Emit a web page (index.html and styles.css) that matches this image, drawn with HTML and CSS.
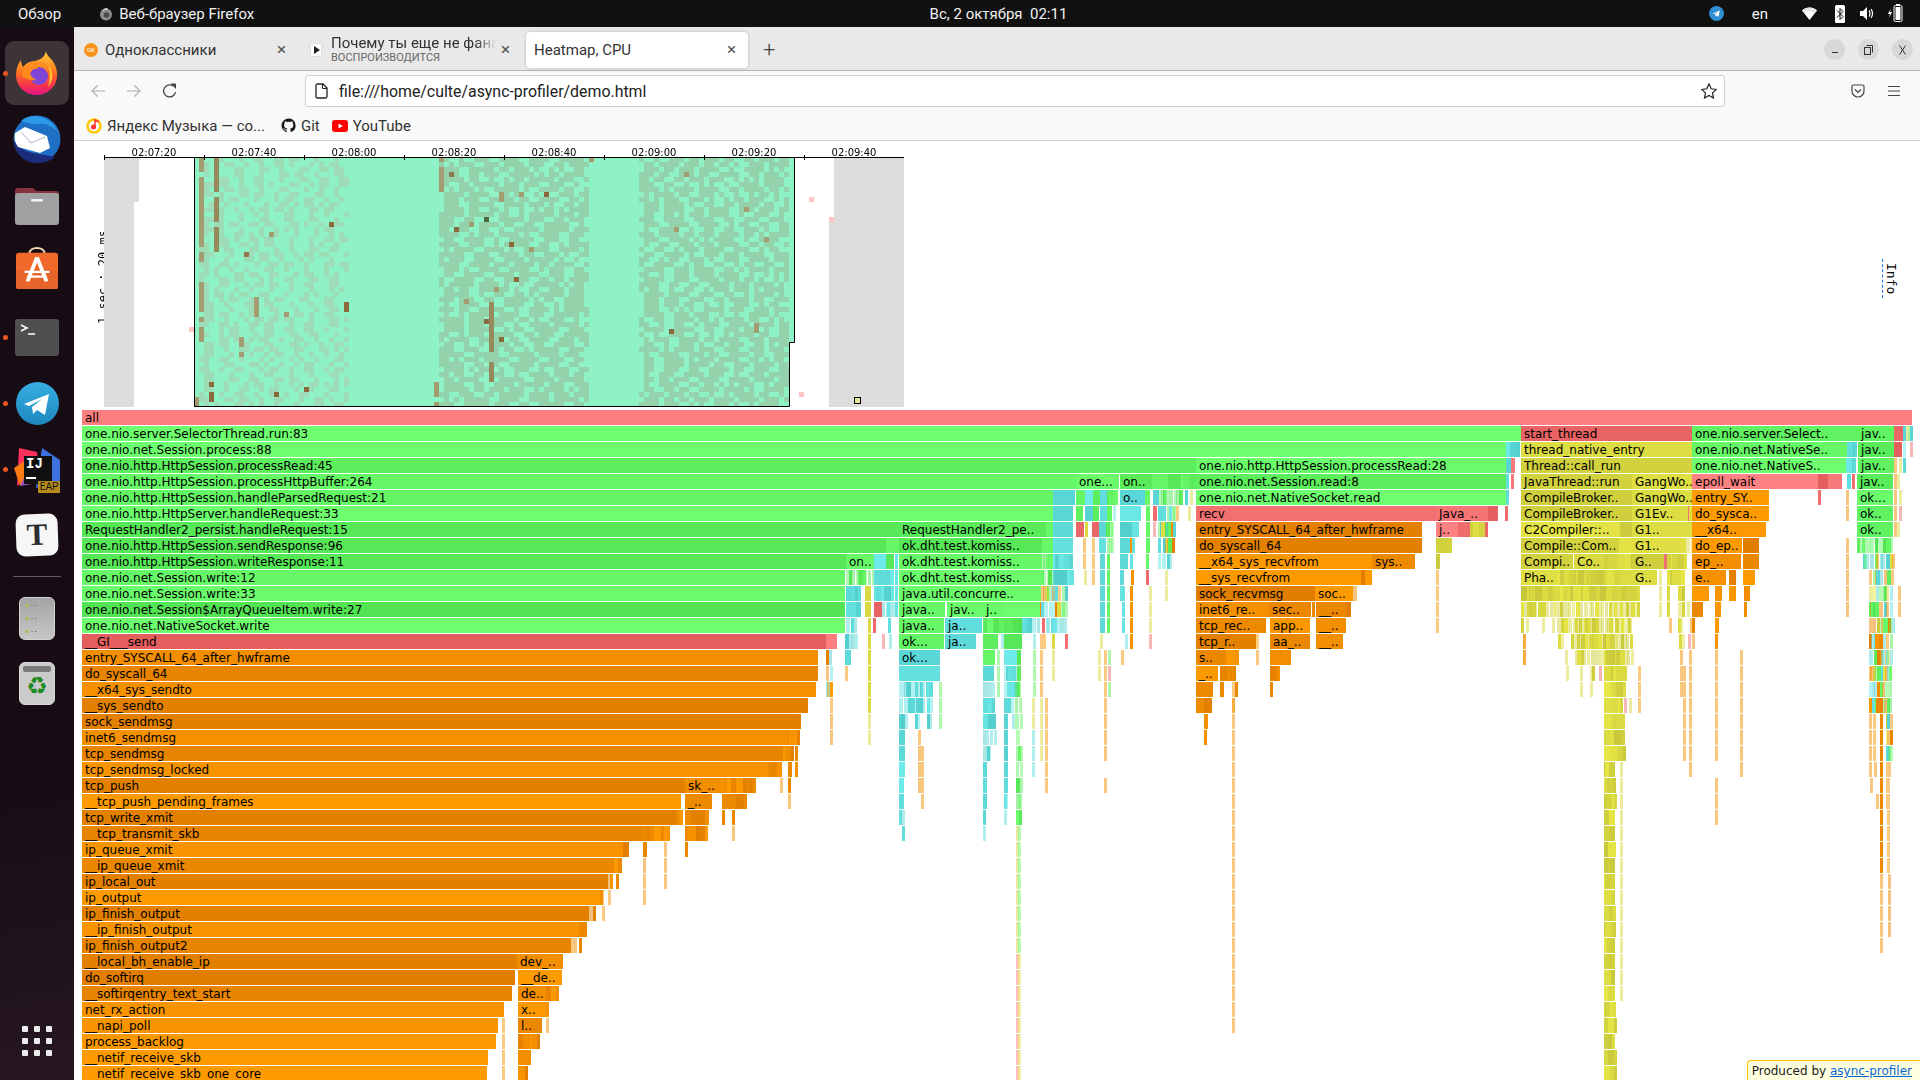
FILE: index.html
```html
<!DOCTYPE html>
<html lang="ru">
<head>
    <meta charset="UTF-8">
    <title>Heatmap, CPU</title>
    <link rel="stylesheet" href="styles.css">
</head>
<body>

<div class="topbar">
    <div class="topbar-left">
        <span>Обзор</span>
        <span class="app-name">
            <svg width="14" height="14" viewBox="0 0 14 14"><circle cx="7" cy="7.5" r="6" fill="#8d8d8d"/><circle cx="7.5" cy="8" r="2.8" fill="#4b4b4b"/><path d="M3 4C4 1.5 7 .5 9 1c-1 .8-1 1.500-.5 2C6 2.800 4.500 3.200 3 4z" fill="#d4d4d4"/></svg>
            Веб-браузер Firefox
        </span>
    </div>
    <div class="clock">Вс, 2 октября&nbsp; 02:11</div>
    <div class="tray">
        <svg class="tray-tg" width="15" height="15" viewBox="0 0 15 15"><circle cx="7.500" cy="7.500" r="7.500" fill="#2f8fd0"/><path d="M3.800 7.600l7-3-1.300 6.300-2-1.500-1 1-.3-2 2.700-2.300-3.400 2z" fill="#fff"/></svg>
        <span class="tray-lang">en</span>
        <svg class="tray-wifi" width="15" height="14" viewBox="0 0 15 14"><path d="M0 3.500C4 -.5 11 -.5 15 3.500L7.500 13z" fill="#fff"/><path d="M2.500 6L0 3.500C4 -.5 11 -.5 15 3.500L12.500 6C9.500 3.500 5.500 3.500 2.500 6z" fill="#e8e8e8"/></svg>
        <svg class="tray-bt" width="10" height="18" viewBox="0 0 10 18"><rect width="10" height="18" rx="1.500" fill="#fff"/><path d="M2 5.500l6 6-3 3v-11l3 3-6 6" fill="none" stroke="#111" stroke-width="1"/></svg>
        <svg class="tray-vol" width="15" height="15" viewBox="0 0 15 15"><path d="M1 5h3l4-4v13l-4-4H1z" fill="#fff"/><path d="M10 4.500c1.300 1.500 1.300 4.500 0 6M12 3c2 2.500 2 6.500 0 9" fill="none" stroke="#fff" stroke-width="1.200"/></svg>
        <svg class="tray-bat" width="16" height="19" viewBox="0 0 16 19"><path d="M3.500 5L1 10h2l-1 4 3-6H3z" fill="#fff"/><rect x="7" y="1.500" width="8" height="16" rx="1.500" fill="none" stroke="#fff"/><rect x="9" y="0" width="4" height="2" fill="#fff"/><rect x="8.500" y="3" width="5" height="13" fill="#fff"/></svg>
    </div>
</div>

<div class="desktop">
    <nav class="dock">
        <div class="dock-item dock-active">
            <span class="run-dot"></span>
            <svg width="44" height="44" viewBox="0 0 44 44">
                <defs><linearGradient id="fx" x1="0" y1="0" x2="0" y2="1"><stop offset="0" stop-color="#ffd23a"/><stop offset=".45" stop-color="#ff7a1c"/><stop offset=".8" stop-color="#f5304f"/><stop offset="1" stop-color="#e3128c"/></linearGradient></defs>
                <path d="M31 0c0 4 5 7 8 12 4 7 4 15 1 21-4 7-11 11-18 11C10 44 1 35 1 24 1 18 3 13 6 9c0 3 1 5 2 7 3-4 7-6 12-6 5-1 10-4 11-10z" fill="url(#fx)"/>
                <circle cx="24" cy="25" r="9" fill="#7f45d8"/>
                <path d="M7 25c0-7 6-13 13-14 4-1 9 0 12 4-4-2-9-2-12 0 2 1 3 2 3 3-4-1-7 1-8 4 1 3 3 6 7 7-6 1-12-1-15-4z" fill="#ff8a1e"/>
                <path d="M33 14c3 3 5 8 4 14-1 3-2 6-4 8 2-6 3-14 0-22z" fill="#ffc52e"/>
            </svg>
        </div>
        <div class="dock-item">
            <svg width="48" height="48" viewBox="0 0 48 48">
                <circle cx="24" cy="24" r="23.500" fill="#1f6fc4"/>
                <path d="M8 6c5-5 13-6 20-4 8 2 14 8 17 15-6-6-12-9-20-8C18 9 12 8 8 6z" fill="#2d9ae8"/>
                <path d="M1 26C10 40 26 38 42 42c-6 5-12 6-18 6C11 48 1 38 1 26z" fill="#1a2c7a"/>
                <path d="M2 18l10-6 22 9 3 12-10 5L5 32C2 28 1 23 2 18z" fill="#fff"/>
                <path d="M8 17l10 11 14-6" fill="none" stroke="#a8b4c4" stroke-width="1"/>
            </svg>
        </div>
        <div class="dock-item">
            <svg width="44" height="40" viewBox="0 0 44 40">
                <path d="M0 6q0-3 3-3h15l3 3h20q3 0 3 3v10H0z" fill="#87323c"/>
                <rect y="8" width="44" height="32" rx="3" fill="#a0a0a0"/>
                <rect x="16" y="14" width="12" height="2.500" rx="1" fill="#f2f2f2"/>
            </svg>
        </div>
        <div class="dock-item dock-store">
            <svg width="44" height="42" viewBox="0 0 44 44">
                <path d="M14 7c0-8 16-8 16 0" fill="none" stroke="#f0d9b0" stroke-width="2"/>
                <rect y="6" width="44" height="38" rx="3" fill="#f0682a"/>
                <rect y="24" width="44" height="20" rx="3" fill="#e7652b"/>
                <path d="M22 11l-10 25M22 11l10 25" stroke="#fff" stroke-width="4" fill="none"/>
                <path d="M9 26h26M12 31h20" stroke="#fff" stroke-width="2.500"/>
            </svg>
        </div>
        <div class="dock-item">
            <span class="run-dot"></span>
            <svg width="44" height="37" viewBox="0 0 44 37">
                <rect width="44" height="37" rx="3" fill="#4f4f4f"/>
                <path d="M6 6l6 3-6 3M13 15h7" fill="none" stroke="#fff" stroke-width="1.500"/>
            </svg>
        </div>
        <div class="dock-item">
            <span class="run-dot"></span>
            <svg width="43" height="43" viewBox="0 0 43 43">
                <defs><linearGradient id="tg" x1="0" y1="0" x2="0" y2="1"><stop offset="0" stop-color="#37aee2"/><stop offset="1" stop-color="#1e88c0"/></linearGradient></defs>
                <circle cx="21.500" cy="21.500" r="21.500" fill="url(#tg)"/>
                <path d="M8 22l25-10-4 21-8-5-4 4-1-7 10-8-13 7z" fill="#fff"/>
            </svg>
        </div>
        <div class="dock-item">
            <span class="run-dot"></span>
            <div class="idea">
                <svg width="46" height="42" viewBox="0 0 46 42">
                    <path d="M5 0l18 4 2 20-22 14z" fill="#fe315d"/>
                    <path d="M0 20l12-8 6 18-12 8z" fill="#f97a12"/>
                    <path d="M28 0l18 12v22l-24 6z" fill="#3b72e0"/>
                    <path d="M6 38l12-24 12 20z" fill="#9a4fc0"/>
                </svg>
                <div class="idea-box"><span>IJ</span><i></i></div>
                <div class="idea-eap">EAP</div>
            </div>
        </div>
        <div class="dock-item dock-text">
            <div class="text-icon">T</div>
        </div>
        <div class="dock-divider"></div>
        <div class="dock-item dock-small">
            <div class="disk-icon"><i></i><i></i><i></i></div>
        </div>
        <div class="dock-item dock-small">
            <div class="trash-icon"><i></i><span>♻</span></div>
        </div>
        <div class="dock-grid">
            <i></i><i></i><i></i><i></i><i></i><i></i><i></i><i></i><i></i>
        </div>
    </nav>

    <div class="browser">
        <div class="tabstrip">
            <div class="tab">
                <span class="ok-icon">ок</span>
                <span class="tab-title">Одноклассники</span>
                <span class="tab-close">×</span>
            </div>
            <div class="tab tab-media">
                <span class="play-icon"></span>
                <div class="tab-title">
                    <div class="tab-line">Почему ты еще не фана</div>
                    <div class="tab-sub">ВОСПРОИЗВОДИТСЯ</div>
                </div>
                <span class="tab-close">×</span>
            </div>
            <div class="tab tab-active">
                <span class="tab-title">Heatmap, CPU</span>
                <span class="tab-close">×</span>
            </div>
            <div class="tab-new">+</div>
            <div class="win-controls">
                <span>
                    <svg width="8" height="8" viewBox="0 0 8 8"><path d="M1 6.500h6" stroke="#333"/></svg>
                </span>
                <span>
                    <svg width="9" height="10" viewBox="0 0 9 10"><rect x=".5" y="2.500" width="6" height="7" fill="none" stroke="#333"/><path d="M2.500 .5h6v7" fill="none" stroke="#333"/></svg>
                </span>
                <span>
                    <svg width="9" height="10" viewBox="0 0 9 10"><path d="M1.500 .5l6 9M7.500 .5l-6 9" stroke="#333"/></svg>
                </span>
            </div>
        </div>

        <div class="navbar">
            <svg class="nav-icon" width="16" height="16" viewBox="0 0 16 16"><path d="M15 8H2M7.500 2.500L2 8l5.500 5.500" fill="none" stroke="#b0b0b0" stroke-width="1.200"/></svg>
            <svg class="nav-icon" width="16" height="16" viewBox="0 0 16 16"><path d="M1 8h13M8.500 2.500L14 8l-5.500 5.500" fill="none" stroke="#b0b0b0" stroke-width="1.200"/></svg>
            <svg class="nav-icon" width="16" height="16" viewBox="0 0 16 16"><path d="M13.500 9A6 6 0 1 1 11 3" fill="none" stroke="#444" stroke-width="1.300"/><path d="M8.500 .5h5.500v5.500z" fill="#444"/></svg>
            <div class="urlbar">
                <svg width="13" height="16" viewBox="0 0 13 16"><path d="M1 2.500q0-1.500 1.500-1.500H8l4 4v8.500q0 1.500-1.500 1.500h-8Q1 15 1 13.500z" fill="none" stroke="#222" stroke-width="1.300"/><path d="M7.500 1v4.500H12" fill="none" stroke="#222"/></svg>
                <span class="url">file:///home/culte/async-profiler/demo.html</span>
                <svg class="url-star" width="16" height="16" viewBox="0 0 16 16"><path d="M8 1l2.200 4.800 5.100.6-3.800 3.500 1 5.100L8 12.500 3.500 15l1-5.100L.7 6.400l5.100-.6z" fill="none" stroke="#222" stroke-width="1.200"/></svg>
            </div>
            <div class="nav-right">
                <svg width="14" height="15" viewBox="0 0 14 15"><path d="M1 2.500q0-1.500 1.500-1.500h9Q13 1 13 2.500V7a6 6 0 0 1-12 0z" fill="none" stroke="#444" stroke-width="1.200"/><path d="M4 5.500l3 3 3-3" fill="none" stroke="#444" stroke-width="1.200"/></svg>
                <svg width="14" height="12" viewBox="0 0 14 12"><path d="M1 1.500h12M1 6h12M1 10.500h12" stroke="#444" stroke-width="1.200"/></svg>
            </div>
        </div>

        <div class="bookmarks">
            <div class="bookmark bookmark-long">
                <svg width="16" height="16" viewBox="0 0 16 16"><circle cx="8" cy="8" r="6.500" fill="none" stroke="#fdc800" stroke-width="2.500"/><circle cx="7.500" cy="9" r="2.500" fill="#f33"/><path d="M9 9V2l4 2" fill="none" stroke="#f33" stroke-width="1.500"/></svg>
                Яндекс Музыка — со...
            </div>
            <div class="bookmark">
                <svg width="15" height="15" viewBox="0 0 16 16"><path d="M8 .5a7.500 7.500 0 0 0-2.400 14.600c.4.100.5-.2.500-.4v-1.400c-2 .4-2.500-1-2.500-1-.4-.9-.9-1.100-.9-1.100-.7-.5 0-.5 0-.5.800.1 1.200.8 1.200.8.700 1.200 1.800.9 2.300.7.100-.5.300-.9.500-1.100-1.700-.2-3.400-.8-3.400-3.700 0-.8.300-1.500.8-2-.1-.2-.4-1 .1-2 0 0 .6-.2 2.100.8a7 7 0 0 1 3.800 0c1.500-1 2.100-.8 2.100-.8.400 1 .1 1.800.1 2 .5.500.8 1.200.8 2 0 2.900-1.700 3.500-3.400 3.700.3.200.5.700.5 1.400v2.100c0 .2.100.5.500.4A7.500 7.500 0 0 0 8 .5z" fill="#1a1a1a"/></svg>
                Git
            </div>
            <div class="bookmark">
                <svg width="16" height="12" viewBox="0 0 16 12"><rect width="16" height="12" rx="3" fill="#f00"/><path d="M6.500 3.500v5L11 6z" fill="#fff"/></svg>
                YouTube
            </div>
        </div>

        <main class="page">
            <div class="info-tab">Info</div>

            <section class="heat">
                <div class="heat-axis">
                    <span>02:07:20</span><span>02:07:40</span><span>02:08:00</span><span>02:08:20</span>
                    <span>02:08:40</span><span>02:09:00</span><span>02:09:20</span><span>02:09:40</span>
                </div>
                <div class="heat-body">
                    <div class="heat-ylabel"><span>1 sec : 20 ms</span></div>
                    <canvas id="heatmap" width="800" height="250"></canvas>
                </div>
            </section>

            <div id="flame" class="flame"></div>

            <div class="produced">Produced by <a href="#">async-profiler</a></div>
        </main>
    </div>
</div>

<script src="script.js"></script>
</body>
</html>
```

FILE: styles.css
```css
* {
    box-sizing: border-box;
}
html, body {
    height: 100%;
}
body {
    margin: 0;
    overflow: hidden;
    display: flex;
    flex-direction: column;
    font-family: Roboto, "Noto Sans", sans-serif;
    background: #fff;
}

/* gnome panel */
.topbar {
    height: 27px;
    flex: none;
    display: grid;
    grid-template-columns: 1fr auto 1fr;
    align-items: center;
    background: #111;
    color: #f0f0f0;
    font-size: 15px;
}
.topbar-left {
    display: flex;
    align-items: center;
    padding-left: 18px;
    gap: 38px;
}
.app-name {
    display: flex;
    align-items: center;
    gap: 6px;
}
.clock {
    padding-left: 77px;
}
.tray {
    position: relative;
    height: 27px;
    display: flex;
    align-items: center;
    justify-content: flex-end;
    padding-right: 17px;
}
.tray-lang {
    margin: 0 34px 0 28px;
}
.tray-wifi {
    margin-right: 18px;
}
.tray-bt {
    margin-right: 14px;
}
.tray-vol {
    margin-right: 13px;
}

.desktop {
    flex: 1;
    display: flex;
    min-height: 0;
}

/* launcher */
.dock {
    width: 74px;
    flex: none;
    position: relative;
    display: flex;
    flex-direction: column;
    align-items: center;
    padding-top: 14px;
    background: linear-gradient(170deg, #180c14 70%, #261721);
}
.dock-item {
    height: 64px;
    width: 64px;
    margin-bottom: 2px;
    display: flex;
    align-items: center;
    justify-content: center;
    position: relative;
}
.dock-active {
    background: #3d3438;
    border-radius: 9px;
}
.dock-store svg {
    margin-top: -6px;
}
.run-dot {
    position: absolute;
    left: -2px;
    top: 30px;
    width: 5px;
    height: 5px;
    border-radius: 50%;
    background: #e9541f;
}
.idea {
    position: relative;
    width: 46px;
    height: 42px;
}
.idea-box {
    position: absolute;
    left: 10px;
    top: 8px;
    width: 28px;
    height: 28px;
    background: #101010;
    color: #fff;
    font: bold 14px "Liberation Mono", monospace;
    padding: 2px 2px;
}
.idea-box span {
    display: block;
    line-height: 13px;
}
.idea-box i {
    display: block;
    width: 10px;
    height: 2px;
    background: #fff;
    margin-top: 6px;
}
.idea-eap {
    position: absolute;
    right: 0;
    bottom: -3px;
    width: 22px;
    height: 12px;
    line-height: 12px;
    text-align: center;
    background: #b58a1c;
    color: #101010;
    font-size: 10px;
}
.dock-text {
    height: 48px;
    margin-top: 8px;
}
.text-icon {
    width: 42px;
    height: 42px;
    border-radius: 9px;
    background: #f6f6f6;
    color: #2c2c2c;
    text-align: center;
    font: bold 31px/42px "Liberation Serif", serif;
    transform: rotate(-2deg);
}
.dock-divider {
    width: 48px;
    height: 1px;
    margin: 15px 0 19px;
    background: #645a62;
}
.dock-small {
    height: 44px;
    margin-bottom: 21px;
}
.disk-icon {
    width: 36px;
    height: 43px;
    border-radius: 6px;
    background: linear-gradient(#a4a4a4, #c6c6c6);
    border: 1px solid #d4d4d4;
    padding: 6px 5px;
    display: flex;
    flex-direction: column;
    gap: 10px;
}
.disk-icon i {
    display: block;
    width: 4px;
    height: 4px;
    border-radius: 50%;
    background: #a5c24a;
    box-shadow: 5px 0 0 -1px #777, 9px 0 0 -1px #777;
}
.trash-icon {
    width: 36px;
    height: 43px;
    border-radius: 6px;
    background: #cbcbcb;
    border: 1px solid #d8d8d8;
    padding: 3px;
    text-align: center;
}
.trash-icon i {
    display: block;
    height: 6px;
    border-radius: 2px;
    background: #7a7a7a;
}
.trash-icon span {
    display: block;
    color: #1f8a1f;
    font: 24px/28px "DejaVu Sans", sans-serif;
}
.dock-grid {
    position: absolute;
    left: 22px;
    bottom: 24px;
    display: grid;
    grid-template-columns: repeat(3, 6px);
    gap: 6px;
}
.dock-grid i {
    height: 6px;
    border-radius: 1px;
    background: #ececec;
}

/* firefox chrome */
.browser {
    flex: 1;
    min-width: 0;
    display: flex;
    flex-direction: column;
}
.tabstrip {
    height: 44px;
    flex: none;
    display: flex;
    align-items: center;
    padding-top: 2px;
    background: #e9e9e9;
    border-bottom: 1px solid #b4b4b4;
    color: #333;
    font-size: 15px;
}
.tab {
    width: 226px;
    height: 36px;
    display: flex;
    align-items: center;
    padding: 0 12px 0 10px;
    gap: 7px;
    flex: none;
}
.tab-media {
    padding-right: 14px;
    gap: 9px;
}
.tab-active {
    width: 222px;
    background: #fff;
    border-radius: 4px;
    box-shadow: 0 0 3px rgba(0, 0, 0, .25);
    padding: 0 10px 0 8px;
}
.tab-title {
    flex: 1;
    min-width: 0;
    overflow: hidden;
    white-space: nowrap;
}
.tab-line {
    line-height: 17px;
    -webkit-mask-image: linear-gradient(90deg, #000 88%, transparent);
    mask-image: linear-gradient(90deg, #000 88%, transparent);
}
.tab-sub {
    line-height: 12px;
    font-size: 11px;
    color: #666;
}
.tab-close {
    font-size: 17px;
    line-height: 17px;
    color: #555;
    margin-right: 2px;
}
.tab-media .tab-close {
    margin-left: -4px;
}
.ok-icon {
    width: 14px;
    height: 14px;
    border-radius: 50%;
    background: #f7931e;
    color: #fff;
    font-size: 7px;
    line-height: 14px;
    text-align: center;
}
.play-icon {
    width: 12px;
    height: 14px;
    border: 1px solid #ddd;
    border-radius: 2px;
    background: #fff;
    position: relative;
    flex: none;
}
.play-icon::after {
    content: "";
    position: absolute;
    left: 3px;
    top: 2px;
    border-left: 6px solid #222;
    border-top: 4px solid transparent;
    border-bottom: 4px solid transparent;
}
.tab-new {
    margin-left: 15px;
    font-size: 22px;
    font-weight: 300;
    color: #444;
}
.win-controls {
    margin-left: auto;
    padding-right: 7px;
    display: flex;
    gap: 13px;
}
.win-controls span {
    width: 21px;
    height: 21px;
    border-radius: 50%;
    background: #d8d8d8;
    display: flex;
    align-items: center;
    justify-content: center;
}

.navbar {
    height: 38px;
    flex: none;
    display: flex;
    align-items: center;
    padding: 2px 0 0 16px;
    background: #f9f9fa;
    position: relative;
}
.nav-icon {
    margin-right: 20px;
    flex: none;
}
.urlbar {
    width: 1420px;
    height: 32px;
    margin-left: 107px;
    flex: none;
    display: flex;
    align-items: center;
    gap: 11px;
    padding: 0 7px 0 9px;
    background: #fff;
    border: 1px solid #cfcfcf;
    border-radius: 3px;
    font-size: 15.900px;
    color: #222;
}
.url {
    flex: 1;
}
.nav-right {
    margin-left: auto;
    display: flex;
    align-items: center;
    gap: 22px;
    padding-right: 19px;
}

.bookmarks {
    height: 32px;
    flex: none;
    display: flex;
    align-items: center;
    gap: 12px;
    padding: 2px 0 0 12px;
    background: #f9f9fa;
    border-bottom: 1px solid #cfcfcf;
    font-size: 15px;
    color: #333;
}
.bookmark {
    display: flex;
    align-items: center;
    gap: 5px;
}
.bookmark-long {
    margin-right: 4px;
}

/* the profiler page */
.page {
    flex: 1;
    position: relative;
    overflow: hidden;
    background: #fff;
    font-family: "DejaVu Sans", sans-serif;
}
.heat {
    width: 800px;
    margin-left: 30px;
}
.heat-axis {
    display: flex;
    height: 16px;
    box-shadow: 0 1px 0 #000;
    position: relative;
    z-index: 1;
}
.heat-axis span {
    width: 100px;
    position: relative;
    text-align: center;
    font-size: 10px;
    line-height: 24px;
    height: 15px;
}
.heat-axis span::after {
    content: "";
    position: absolute;
    left: 0;
    top: 14px;
    width: 1px;
    height: 5px;
    background: #000;
}
.heat-body {
    position: relative;
    height: 250px;
}
#heatmap {
    display: block;
}
.heat-ylabel {
    position: absolute;
    right: 100%;
    top: 75px;
    width: 8px;
    height: 92px;
    overflow: hidden;
}
.heat-ylabel span {
    display: block;
    width: 14px;
    height: 92px;
    writing-mode: vertical-rl;
    transform: rotate(180deg);
    font: 12px/14px "DejaVu Sans Mono", monospace;
    white-space: nowrap;
}
.info-tab {
    position: absolute;
    top: 118px;
    right: 22px;
    height: 39px;
    padding-left: 2px;
    writing-mode: vertical-rl;
    border-left: 1px dashed #1a73e8;
    font: 13px/13px "DejaVu Sans Mono", monospace;
    text-align: center;
}
.flame {
    margin: 3px 8px 0;
}
.flame-row {
    position: relative;
    height: 15px;
    margin-bottom: 1px;
}
.frame {
    position: absolute;
    top: 0;
    bottom: 0;
    overflow: hidden;
    white-space: nowrap;
    padding-left: 3px;
    font-size: 12px;
    line-height: 17px;
    color: #000;
}
.produced {
    position: absolute;
    right: 0;
    bottom: 0;
    height: 20px;
    padding: 1px 8px 0 4px;
    background: #ffffe0;
    border: 1px solid #ffc000;
    border-width: 1px 0 0 1px;
    border-top-left-radius: 4px;
    font-size: 12px;
    line-height: 19px;
    color: #222;
}
.produced a {
    color: #0a66d8;
}
```

FILE: script.js
```js
// seeded random so the picture is the same every run
let seed = 12345;
function rnd() {
    seed = (seed * 1664525 + 1013904223) % 4294967296;
    return seed / 4294967296;
}

const palette = {
    g: [0x50, 0xe1, 0x50, 30, 30, 30],
    a: [0x50, 0xcc, 0xcc, 30, 30, 30],
    r: [0xe1, 0x5a, 0x5a, 30, 40, 40],
    y: [0xc8, 0xc8, 0x3c, 30, 30, 10],
    o: [0xe1, 0x7d, 0x00, 30, 30, 0]
};

function colorOf(type, shade) {
    const c = palette[type];
    const r = Math.round(c[0] + shade * c[3]);
    const g = Math.round(c[1] + shade * c[4]);
    const b = Math.round(c[2] + shade * c[5]);
    return `rgb(${r},${g},${b})`;
}

/* ---------- heatmap ---------- */

function drawHeatmap() {
    const ctx = document.getElementById('heatmap').getContext('2d');
    const X0 = 104, Y0 = 157;
    const cell = (x, y, col) => {
        ctx.fillStyle = col;
        ctx.fillRect(x - X0, y - Y0, 5, 5);
    };

    ctx.fillStyle = '#dcdcdc';
    ctx.fillRect(0, 0, 35, 45);
    ctx.fillRect(0, 45, 30, 205);
    ctx.fillRect(730, 0, 70, 60);
    ctx.fillRect(725, 60, 75, 190);

    ctx.fillStyle = '#8ff2c6';
    ctx.fillRect(90, 0, 600, 185);
    ctx.fillRect(90, 0, 595, 250);

    // [from x, to x, longest dark run, longest light run, colour]
    const blocks = [
        [199, 349, 2, 3, '#9ddcb6'],
        [439, 589, 5, 2, '#93d2ab'],
        [639, 789, 4, 2, '#93d2ab']
    ];
    for (const [a, b, darkRun, lightRun, col] of blocks) {
        for (let y = 157; y < 407; y += 5) {
            let x = a + 5 * Math.floor(rnd() * 2);
            while (x < b) {
                let run = 1 + Math.floor(rnd() * darkRun);
                for (; run > 0 && x < b; run--, x += 5) cell(x, y, col);
                x += 5 * (1 + Math.floor(rnd() * lightRun));
            }
        }
    }

    const streak = (x, y0, y1, col) => {
        for (let y = y0; y < y1; y += 5) {
            if (rnd() > 0.15) cell(x, y, col);
        }
    };
    const olive = '#a39c70', brown = '#968a5c', dark = '#8a6a3c';
    streak(199, 157, 342, olive);
    streak(214, 157, 252, brown);
    streak(209, 382, 407, dark);
    streak(194, 397, 407, olive);
    streak(254, 297, 317, olive);
    streak(239, 337, 357, olive);
    streak(344, 302, 312, dark);
    streak(434, 382, 407, olive);
    streak(439, 157, 192, olive);
    streak(499, 192, 202, olive);
    streak(489, 302, 382, brown);
    streak(494, 287, 297, olive);
    streak(754, 323, 332, olive);
    [[244, 252, '#96744a'], [329, 222, dark], [269, 232, olive], [284, 312, olive], [304, 387, dark],
     [274, 392, dark], [484, 217, '#4d6a3c'], [454, 227, dark], [469, 222, olive], [509, 242, dark],
     [529, 247, olive], [514, 277, dark], [484, 319, dark], [544, 192, dark], [519, 192, olive],
     [669, 329, dark], [764, 237, olive], [744, 207, olive], [684, 172, olive], [674, 227, olive],
     [464, 299, olive], [499, 337, dark], [449, 172, '#8a7a50'], [589, 157, olive]
    ].forEach(([x, y, col]) => cell(x, y, col));

    // stray pink cells
    [[189, 327], [809, 197], [829, 217], [799, 392]].forEach(([x, y]) => cell(x, y, '#ffc4c4'));

    // current selection outline
    ctx.strokeStyle = '#000';
    ctx.lineWidth = 1;
    ctx.beginPath();
    ctx.moveTo(90.5, 0);
    ctx.lineTo(90.5, 249.5);
    ctx.lineTo(685.5, 249.5);
    ctx.lineTo(685.5, 185.5);
    ctx.lineTo(690.5, 185.5);
    ctx.lineTo(690.5, 0);
    ctx.stroke();

    // small marker
    ctx.fillStyle = '#e6e696';
    ctx.fillRect(751, 241, 5, 5);
    ctx.strokeRect(750.5, 240.5, 6, 6);
}

/* ---------- flame graph ---------- */

const rows = Array.from({ length: 42 }, () => []);

// a frame is [from x, to x, code, label]; code is type + shade digit, "p" = faded,
// "*" = solid band of stripes, "~" = stripes with holes
function add(k, ...frames) {
    rows[k].push(...frames);
}
function span(from, to, ...frames) {
    for (let k = from; k <= to; k++) add(k, ...frames);
}
// 1px line
function ln(x, code) {
    return [x, x + 1, code || 'o5p'];
}

const labels = [
    ['all', 'r8', 1912],
    ['one.nio.server.SelectorThread.run:83', 'g9', 1521],
    ['one.nio.net.Session.process:88', 'g9', 1506],
    ['one.nio.http.HttpSession.processRead:45', 'g4', 1196],
    ['one.nio.http.HttpSession.processHttpBuffer:264', 'g7', 1076],
    ['one.nio.http.HttpSession.handleParsedRequest:21', 'g6', 1053],
    ['one.nio.http.HttpServer.handleRequest:33', 'g9', 1053],
    ['RequestHandler2_persist.handleRequest:15', 'g2', 899],
    ['one.nio.http.HttpSession.sendResponse:96', 'g2', 886],
    ['one.nio.http.HttpSession.writeResponse:11', 'g2', 846],
    ['one.nio.net.Session.write:12', 'g7', 845],
    ['one.nio.net.Session.write:33', 'g8', 845],
    ['one.nio.net.Session$ArrayQueueItem.write:27', 'g1', 845],
    ['one.nio.net.NativeSocket.write', 'g9', 845],
    ['__GI___send', 'r1', 826],
    ['entry_SYSCALL_64_after_hwframe', 'o5', 818],
    ['do_syscall_64', 'o2', 818],
    ['__x64_sys_sendto', 'o6', 816],
    ['__sys_sendto', 'o1', 808],
    ['sock_sendmsg', 'o1', 795],
    ['inet6_sendmsg', 'o6', 787],
    ['tcp_sendmsg', 'o2', 783],
    ['tcp_sendmsg_locked', 'o7', 768],
    ['tcp_push', 'o1', 685],
    ['__tcp_push_pending_frames', 'o9', 681],
    ['tcp_write_xmit', 'o1', 677],
    ['__tcp_transmit_skb', 'o2', 643],
    ['ip_queue_xmit', 'o7', 617],
    ['__ip_queue_xmit', 'o3', 614],
    ['ip_local_out', 'o1', 608],
    ['ip_output', 'o9', 600],
    ['ip_finish_output', 'o1', 589],
    ['__ip_finish_output', 'o7', 579],
    ['ip_finish_output2', 'o2', 571],
    ['__local_bh_enable_ip', 'o1', 517],
    ['do_softirq', 'o0', 515],
    ['__softirqentry_text_start', 'o2', 512],
    ['net_rx_action', 'o7', 504],
    ['__napi_poll', 'o7', 498],
    ['process_backlog', 'o8', 496],
    ['__netif_receive_skb', 'o9', 488],
    ['__netif_receive_skb_one_core', 'o9', 487]
];
labels.forEach(([name, code, end], k) => add(k, [82, end, code, name]));

// first rows, right hand part
add(1, [1692, 1858, 'g5', 'one.nio.server.Select..'], [1521, 1692, 'r2', 'start_thread'], [1858, 1894, 'g5', 'jav..'], [1894, 1903, 'r3'], [1903, 1912, 'm~']);
add(2, [1506, 1520, 'a*'], [1521, 1692, 'y6', 'thread_native_entry'], [1692, 1847, 'g7', 'one.nio.net.NativeSe..'], [1847, 1857, 'a*'], [1858, 1894, 'g3', 'jav..'], [1894, 1902, 'r1'], [1903, 1906, 'a9p'], ln(1910, 'r5p'));
add(3, [1196, 1506, 'g8', 'one.nio.http.HttpSession.processRead:28'], [1506, 1511, 'a*'], [1511, 1515, 'r7'], [1521, 1692, 'y3', 'Thread::call_run'], [1692, 1846, 'g9', 'one.nio.net.NativeS..'], [1846, 1855, 'a*'], [1858, 1894, 'g5', 'jav..'], ln(1894), ln(1899, 'y5p'), [1903, 1905, 'a4']);
add(4, [1076, 1119, 'g8', 'one...'], [1120, 1152, 'g3', 'on..'], [1152, 1168, 'g7'], [1168, 1181, 'g2'], [1181, 1196, 'g*'],
    [1196, 1506, 'g4', 'one.nio.net.Session.read:8'], [1506, 1509, 'a5'], [1511, 1514, 'r7'],
    [1521, 1632, 'y3', 'JavaThread::run'], [1632, 1692, 'y7', 'GangWo..'], [1692, 1818, 'r9', 'epoll_wait'], [1818, 1828, 'r1'], [1828, 1842, 'r7'], [1847, 1851, 'a5'], [1852, 1855, 'r5'], [1857, 1893, 'g3', 'jav..'], ln(1894), ln(1897, 'y5p'));
add(5, [1053, 1075, 'a3'], [1076, 1085, 'g6'], [1085, 1093, 'a9'], [1093, 1100, 'g4'], [1100, 1107, 'a5'], [1107, 1117, 'g*'], [1120, 1145, 'a3', 'o..'], [1145, 1150, 'g7'], [1153, 1159, 'a3'], [1159, 1181, 'g~'], [1185, 1188, 'a3'], ln(1190, 'y5p'),
    [1196, 1506, 'g9', 'one.nio.net.NativeSocket.read'], ln(1506, 'a5'),
    [1521, 1632, 'y2', 'CompileBroker..'], [1632, 1692, 'y6', 'GangWo..'], [1692, 1769, 'o9', 'entry_SY..'], ln(1818, 'r5'), ln(1846), [1857, 1893, 'g8', 'ok...'], ln(1894), ln(1899, 'y5p'));
add(6, [1053, 1073, 'a3'], [1076, 1083, 'g5'], [1085, 1093, 'a2'], [1093, 1099, 'g4'], [1100, 1107, 'a5'], [1107, 1112, 'g*'], ln(1113, 'a9p'), [1120, 1141, 'a8'], [1146, 1150, 'g7'], [1153, 1157, 'r4'], [1158, 1166, 'a5'], [1167, 1179, 'm~'], ln(1188, 'y5p'),
    [1196, 1436, 'r5', 'recv'], [1436, 1488, 'r6', 'Java_..'], [1488, 1497, 'r*'], [1505, 1507, 'r4'],
    [1521, 1632, 'y2', 'CompileBroker..'], [1632, 1688, 'y6', 'G1Ev..'], ln(1688, 'r5'), [1689, 1692, 'y7'], [1692, 1769, 'o9', 'do_sysca..'], ln(1846), [1857, 1893, 'g5', 'ok..'], ln(1894), ln(1899, 'r5p'));
add(7, [899, 1046, 'g3', 'RequestHandler2_pe..'], [1046, 1053, 'g7'], [1053, 1073, 'a4'], [1076, 1084, 'r3'], ln(1085, 'y5'), [1092, 1099, 'r3'], [1099, 1106, 'a3'], [1106, 1113, 'g~'], [1120, 1132, 'a1'], [1132, 1139, 'a7'], [1146, 1150, 'g7'], ln(1153, 'r5p'), [1158, 1175, 'm~'],
    [1196, 1422, 'o1', 'entry_SYSCALL_64_after_hwframe'], [1436, 1458, 'r9', 'j..'], [1458, 1470, 'r4'], [1470, 1485, 'y*'], ln(1485, 'r3'),
    [1521, 1620, 'y8', 'C2Compiler::..'], [1620, 1632, 'y1'], [1632, 1692, 'y6', 'G1..'], [1692, 1766, 'o8', '__x64..'], [1857, 1893, 'g5', 'ok..'], ln(1894), ln(1897, 'y5p'));
add(8, [886, 899, 'g7'], [899, 1042, 'g2', 'ok.dht.test.komiss..'], [1042, 1053, 'g7'], [1053, 1073, 'a6'], ln(1083, 'o7p'), ln(1092, 'o7p'), [1099, 1106, 'a6'], [1107, 1113, 'g~'], [1120, 1130, 'a4'], ln(1130, 'o7'), [1132, 1135, 'a7'], [1146, 1150, 'g7'], [1158, 1160, 'a5'], [1163, 1173, 'm~'],
    [1196, 1422, 'o1', 'do_syscall_64'], [1436, 1452, 'y3'],
    [1521, 1619, 'y3', 'Compile::Com..'], [1619, 1632, 'y8'], [1632, 1686, 'y7', 'G1..'], [1686, 1692, 'y~'], [1692, 1742, 'o9', 'do_ep..'], [1743, 1759, 'o0'], ln(1846), [1857, 1893, 'g~']);
add(9, [846, 874, 'g7', 'on..'], [874, 886, 'a9'], [886, 894, 'g2'], [895, 898, 'a7'], [899, 1042, 'g7', 'ok.dht.test.komiss..'], [1042, 1053, 'g~'], [1053, 1073, 'a*'], ln(1083, 'o7p'), ln(1092, 'o7p'), [1100, 1105, 'a4'], [1107, 1110, 'g6'], [1120, 1128, 'a4'], [1130, 1133, 'a7'], [1146, 1149, 'g7'], [1158, 1172, 'a~'],
    [1196, 1372, 'o8', '__x64_sys_recvfrom'], [1372, 1415, 'o4', 'sys..'], [1436, 1440, 'y1'],
    [1521, 1573, 'y3', 'Compi..'], [1574, 1604, 'y5', 'Co..'], [1604, 1632, 'y*'], [1632, 1664, 'y2', 'G..'], ln(1664, 'r5'), [1667, 1686, 'y*'], [1692, 1741, 'o5', 'ep_..'], [1743, 1759, 'o3'], ln(1846), [1863, 1893, 'm~']);
add(10, [846, 874, 'g~'], [874, 894, 'a*'], [895, 898, 'a7'], [899, 1041, 'g8', 'ok.dht.test.komiss..'], [1041, 1053, 'g~'], [1053, 1072, 'a*'], ln(1084, 'y5p'), ln(1092, 'o7p'), [1100, 1105, 'a4'], [1107, 1109, 'g6'], [1120, 1124, 'a4'], ln(1131, 'o7'), [1146, 1149, 'r4'], [1165, 1168, 'y5p'],
    [1196, 1372, 'o9', '__sys_recvfrom'], [1361, 1365, 'o0'], ln(1436, 'o7p'),
    [1521, 1557, 'y7', 'Pha..'], [1557, 1632, 'y*'], [1632, 1657, 'y6', 'G..'], ln(1659, 'y5p'), [1667, 1685, 'y*'], [1692, 1726, 'o6', 'e..'], [1729, 1736, 'o1'], [1743, 1755, 'o9'], ln(1846), [1869, 1893, 'm~']);
add(11, [846, 860, 'a*'], ln(865, 'y5'), ln(868, 'y5'), [874, 894, 'a*'], [895, 898, 'a7'], [899, 1041, 'g8', 'java.util.concurre..'], [1041, 1068, 'm~'], [1100, 1105, 'a4'], [1107, 1109, 'g6'], [1120, 1125, 'a7'], ln(1130, 'o7'), ln(1149, 'y5p'), ln(1165, 'y5p'),
    [1196, 1315, 'o0', 'sock_recvmsg'], [1315, 1353, 'o9', 'soc..'], [1353, 1357, 'o4p'], ln(1436, 'o7p'),
    [1521, 1640, 'y*'], ln(1659, 'y5p'), [1667, 1670, 'y5'], [1678, 1684, 'y~'], [1692, 1709, 'o8'], [1715, 1722, 'o7'], [1729, 1736, 'o8'], [1744, 1750, 'o5'], ln(1846), [1869, 1893, 'm~'], ln(1898));
add(12, [846, 860, 'a*'], ln(865, 'y5'), ln(868, 'y5'), [874, 882, 'r2'], [882, 894, 'a~'], [895, 898, 'a7'], [899, 945, 'g7', 'java..'], [947, 983, 'g8', 'jav..'], [983, 1005, 'g8', 'j..'], [1005, 1040, 'g9'], [1040, 1068, 'm~'], [1100, 1105, 'a4'], ln(1107, 'g6'), [1122, 1125, 'a7'], ln(1130, 'o7'), ln(1149, 'y5p'),
    [1196, 1269, 'o6', 'inet6_re..'], [1269, 1311, 'o3', 'sec..'], ln(1312, 'o3'), [1316, 1346, 'o3', '__..'], [1346, 1351, 'o0'], ln(1436, 'o7p'),
    [1521, 1640, 'y~'], ln(1659, 'y5p'), [1667, 1670, 'y5'], [1678, 1684, 'y~'], ln(1687, 'y5p'), [1692, 1703, 'o3'], [1715, 1721, 'o7'], [1744, 1747, 'o5'], ln(1846), [1869, 1893, 'm~'], ln(1898));
add(13, [846, 857, 'a~'], ln(868, 'y5'), [873, 876, 'r4'], [888, 891, 'a5'], [899, 944, 'g7', 'java..'], [945, 982, 'a5', 'ja..'], [983, 1022, 'g*'], [1022, 1038, 'a~'], [1042, 1044, 'r4'], [1046, 1067, 'a~'], [1100, 1105, 'a4'], ln(1107, 'g6'), [1122, 1124, 'a7'], ln(1130, 'o7'), ln(1149, 'y5p'),
    [1196, 1266, 'o4', 'tcp_rec..'], [1270, 1310, 'o8', 'app..'], [1316, 1346, 'o5', '__..'], ln(1436, 'o7p'),
    [1521, 1523, 'y4'], ln(1526, 'y5p'), ln(1542, 'y5p'), ln(1552, 'y5p'), [1557, 1632, 'y~'], ln(1669), [1678, 1683, 'y~'], ln(1690), [1692, 1695, 'o2'], [1715, 1719, 'o8'], [1869, 1893, 'm~']);
add(14, [826, 837, 'r8'], [845, 857, 'a~'], ln(868, 'y5'), ln(882, 'r5p'), ln(889, 'a5p'), [899, 944, 'g6', 'ok...'], [945, 976, 'a4', 'ja..'], [983, 998, 'g4'], ln(1001, 'a5p'), [1004, 1022, 'g2'], ln(1033, 'a5p'), [1040, 1046, 'o7p'], ln(1052, 'y5'), ln(1065, 'r5'), ln(1100, 'y5p'), ln(1125, 'a5p'), ln(1130, 'o7'), ln(1149, 'r5p'),
    [1196, 1256, 'o1', 'tcp_r..'], [1256, 1259, 'o9p'], [1270, 1310, 'o3', 'aa_..'], [1316, 1343, 'o5', '__..'], ln(1523, 'o7p'),
    ln(1523, 'o5p'), [1558, 1565, 'y~'], [1571, 1631, 'y~'], [1679, 1683, 'y~'], ln(1688, 'r5p'), ln(1692), [1715, 1717, 'o7'], [1869, 1893, 'm~']);
add(15, [826, 833, 'm~'], [845, 851, 'a4'], ln(868, 'y5'), [899, 940, 'a3', 'ok...'], [983, 995, 'g7'], ln(997, 'g5p'), [1004, 1017, 'a9'], [1017, 1021, 'g2'], ln(1033, 'g5p'), ln(1040, 'o7p'), ln(1052, 'y5p'), ln(1104, 'o7p'), ln(1108, 'g5p'), ln(1121, 'o7p'), ln(1098, 'y5p'),
    [1196, 1226, 'o3', 's..'], [1226, 1239, 'o*'], ln(1256, 'o7p'), [1270, 1291, 'o5'], ln(1523, 'o7p'),
    ln(1523), [1565, 1568, 'y5p'], [1575, 1604, 'y~'], [1604, 1625, 'y*'], [1625, 1633, 'y~'], ln(1680), ln(1689), ln(1715), ln(1740), [1869, 1892, 'm~']);
add(16, [826, 831, 'm~'], ln(845, 'o7p'), ln(868, 'y5'), [899, 940, 'a6'], [983, 994, 'a4'], ln(997, 'g5p'), [1004, 1017, 'a~'], [1017, 1021, 'g4'], ln(1033, 'g5p'), ln(1040, 'o7p'), ln(1052, 'y5p'), ln(1098, 'y5p'), [1104, 1106, 'o7p'], ln(1108, 'r5p'),
    [1196, 1218, 'o8', '_..'], [1220, 1236, 'o*'], [1270, 1279, 'o*'],
    ln(1566, 'y5p'), ln(1580, 'y5p'), [1590, 1593, 'y~'], ln(1599, 'r5p'), [1604, 1625, 'y*'], ln(1638, 'o7p'), ln(1680), ln(1683), ln(1689), ln(1715), ln(1740), [1869, 1892, 'm~']);
add(17, [826, 831, 'm~'], ln(868, 'y5'), [899, 933, 'a~'], ln(939, 'g5p'), [983, 994, 'a~'], ln(997, 'g5p'), [1004, 1015, 'a~'], [1015, 1021, 'g~'], ln(1033, 'g5p'), ln(1040, 'o7p'), ln(1104, 'o7p'), ln(1108, 'g5p'),
    [1196, 1213, 'o4'], [1220, 1224, 'o4'], [1232, 1236, 'o~'], [1270, 1272, 'o3'],
    ln(1580, 'y5p'), ln(1590, 'y5p'), [1604, 1625, 'y*'], ln(1638, 'o7p'), ln(1680), ln(1683), ln(1689), ln(1715), ln(1740), [1869, 1892, 'm~']);
add(18, ln(830, 'o7p'), ln(868, 'y5'), [899, 925, 'a~'], [927, 931, 'a~'], ln(939, 'g5p'), [983, 994, 'a~'], [1004, 1014, 'a~'], [1015, 1021, 'g~'], ln(1032, 'y5p'), ln(1040, 'y5p'), ln(1045, 'o7p'), ln(1104, 'o7p'),
    [1196, 1212, 'o*'], ln(1232),
    [1604, 1621, 'y*'], ln(1624, 'r5p'), ln(1629, 'y5p'), ln(1638, 'o7p'), ln(1683), ln(1689), ln(1715), ln(1740), [1869, 1892, 'm~']);

// kernel stack ends, one row at a time
add(19, [795, 801, 'o*'], ln(830), ln(868, 'y5p'), [899, 906, 'a~'], [915, 921, 'a~'], [927, 931, 'a~'], ln(939, 'g5p'), [983, 994, 'a*'], [1004, 1008, 'a3'], ln(1012, 'a5p'), [1015, 1021, 'g~'], ln(1032, 'y5p'), ln(1040, 'y5p'), ln(1045, 'o7p'), ln(1104), [1204, 1208, 'o6']);
add(20, [787, 798, 'o*'], ln(830), ln(868, 'y5p'), [899, 905, 'a3'], [918, 921, 'o6p'], [983, 992, 'a~'], ln(994, 'a5p'), [1004, 1008, 'a3'], [1016, 1021, 'g~'], ln(1032, 'a5p'), ln(1040, 'y5p'), ln(1045, 'o7p'), ln(1104), [1204, 1207, 'o6']);
add(21, [783, 792, 'o*'], [795, 797, 'o*'], [899, 905, 'a4'], ln(918), ln(921), [983, 989, 'a~'], [1004, 1008, 'a2'], [1016, 1021, 'g~'], ln(1032, 'a5p'), ln(1040, 'y5p'), ln(1045, 'o7p'), ln(1104));
add(22, [768, 782, 'o*'], [788, 792, 'o3'], [795, 797, 'o*'], [899, 905, 'a9'], ln(918), ln(921), [983, 987, 'a4'], [1004, 1008, 'a4'], [1016, 1021, 'g~'], ln(1032, 'a5p'), ln(1045, 'o7p'));
add(23, [721, 754, 'o*'], ln(780), [788, 790, 'o3'], [899, 904, 'a9'], ln(918), ln(921), [983, 987, 'a5'], [1004, 1008, 'a5'], [1016, 1021, 'g~'], ln(1045, 'o7p'), ln(1104));
add(23, [685, 721, 'o5', 'sk_..']);
add(24, [685, 712, 'o4', '_..'], [722, 745, 'o*'], ln(788), [899, 904, 'a5'], ln(921), [983, 987, 'a4'], [1004, 1007, 'a~'], [1016, 1021, 'g~']);
add(25, [677, 681, 'o~'], [685, 708, 'o*'], [722, 724, 'o3'], [732, 734, 'o3'], [899, 903, 'a~'], [983, 985, 'a4'], ln(1004, 'a5p'), [1016, 1021, 'g~']);
add(26, [643, 668, 'o*'], [685, 706, 'o*'], ln(732), [902, 903, 'a5'], ln(983, 'a5p'), [1016, 1018, 'y3p'], [1018, 1021, 'g9p']);
add(27, [617, 629, 'o*'], [643, 647, 'o3'], ln(664), [685, 687, 'o3']);
add(28, [614, 622, 'o*'], [643, 645, 'o~'], ln(664));
add(29, [608, 612, 'o~'], [616, 619, 'o4'], ln(643), ln(664));
add(30, [600, 604, 'o~'], ln(608, 'o7p'), ln(643));
add(31, [589, 595, 'o~'], ln(602, 'o7p'));
add(32, [579, 587, 'o3']);
add(33, [571, 576, 'o~'], [579, 582, 'o3']);
add(34, [517, 563, 'o5', 'dev_..']);
add(35, [518, 562, 'o9', '__de..']);
add(36, [518, 546, 'o5', 'de..'], [546, 558, 'o*']);
add(37, [518, 546, 'o8', 'x..'], [546, 549, 'o*']);
add(38, ln(502, 'o7p'), [518, 542, 'o3', 'l..'], ln(546));
add(39, ln(502, 'o7p'), [518, 538, 'o*']);
add(40, ln(502, 'o7p'), [518, 531, 'o*']);
add(41, ln(502, 'o7p'), [518, 528, 'o*']);
span(27, 33, [1016, 1018, 'y3p'], [1018, 1021, 'g9p']);
span(34, 41, [1016, 1018, 'r9p'], [1018, 1021, 'y8p']);
span(18, 38, ln(1232, 'o6p'));
span(19, 21, [1604, 1625, 'y*'], ln(1683), ln(1689), ln(1715), ln(1740));
span(22, 36, [1604, 1615, 'y*'], ln(1620, 'y5p'));
span(37, 41, [1604, 1615, 'y*']);
add(22, ln(1689), ln(1740));
span(23, 25, ln(1715));
span(19, 21, ln(1869), [1873, 1876, 'o7p'], [1880, 1882, 'o4'], [1886, 1891, 'm~']);
add(22, ln(1869), ln(1874), [1880, 1882, 'o4'], [1886, 1891, 'o6p']);
add(23, ln(1870), [1880, 1882, 'o4'], [1886, 1890, 'o6p']);
add(24, ln(1876), [1880, 1882, 'o4'], [1886, 1890, 'o6p']);
span(25, 26, [1880, 1882, 'o4'], [1887, 1890, 'o6p']);
span(27, 28, [1880, 1882, 'o4'], [1887, 1890, 'o6p']);
span(29, 32, ln(1880), ln(1888, 'o3p'));
add(33, ln(1880));

function frameEl(left, width, background, label, faded) {
    const el = document.createElement('div');
    el.className = 'frame';
    el.style.left = left + 'px';
    el.style.width = width + 'px';
    el.style.background = background;
    if (faded) el.style.opacity = 0.5;
    if (label) el.textContent = label;
    return el;
}

function drawFlame() {
    const flame = document.getElementById('flame');
    rows.forEach((frames) => {
        const row = document.createElement('div');
        row.className = 'flame-row';
        frames.forEach(([a, b, code, label]) => {
            const left = a - 82;
            const kind = code[1];
            if (kind === '*' || kind === '~') {
                // stripes for the thin frames that are too many to list one by one
                let x = left;
                while (x < b - 82) {
                    const w = Math.min(1 + Math.floor(rnd() * (kind === '*' ? 7 : 4)), b - 82 - x);
                    let type = code[0];
                    if (type === 'm') type = 'gaogyoa'[Math.floor(rnd() * 7)];
                    const holed = kind === '~' && rnd() < 0.3;
                    row.appendChild(frameEl(x, w, colorOf(type, rnd()), '', kind === '~' && rnd() < 0.4 || holed));
                    x += w + (holed ? 1 : 0);
                }
                return;
            }
            const faded = code[2] === 'p';
            row.appendChild(frameEl(left, b - a, colorOf(code[0], code[1] / 9), label, faded));
        });
        flame.appendChild(row);
    });
}

drawHeatmap();
drawFlame();
```
